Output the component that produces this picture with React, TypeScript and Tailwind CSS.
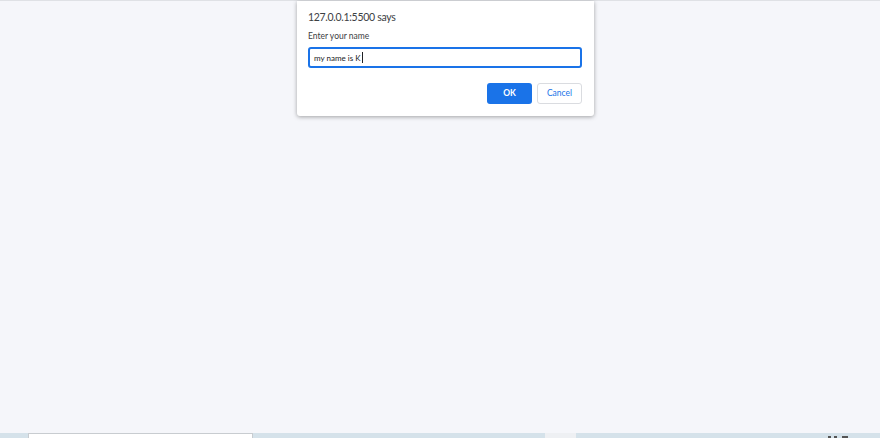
import React from 'react';

const PromptDialog = () => {
  return (
    <div className="absolute left-[297px] top-0 w-[297px] h-[115px] bg-white rounded-b-[3px] shadow-[0_1px_4px_rgba(0,0,0,0.35)] px-[11px] pt-[9px]">
      <div className="text-[10.5px] leading-[14px] tracking-[-0.3px] text-[#3c4043]">127.0.0.1:5500 says</div>
      <div className="mt-[6px] text-[8.5px] leading-[12px] text-[#3c4043]">Enter your name</div>
      <div className="mt-[5px] h-[21px] w-[274px] border-2 border-[#1a73e8] rounded-[3px] flex items-center pl-[4px] text-[8px] text-[#202124]">
        my name is K
        <span className="ml-[2px] inline-block w-px h-[11px] bg-[#202124]" />
      </div>
      <div className="mt-[15px] flex justify-end gap-[5px] pr-[1px]">
        <button className="w-[45px] h-[21px] rounded-[3px] bg-[#1a73e8] text-white text-[8.5px] font-bold">OK</button>
        <button className="w-[45px] h-[21px] rounded-[3px] bg-white border border-[#dadce0] text-[#1a73e8] text-[8.5px]">Cancel</button>
      </div>
    </div>
  );
};

export default function App() {
  return (
    <div className="h-[438px] w-[880px] flex flex-col bg-[#f5f6fa] overflow-hidden" style={{ fontFamily: 'Lato, "Open Sans", sans-serif' }}>
      <div className="relative flex-1 border-t border-[#dfe1e5]">
        <PromptDialog />
      </div>
      {/* taskbar edge peeking in at the bottom */}
      <div className="h-[5px] flex bg-[#d5e2ea]">
        <div className="ml-[28px] w-[225px] bg-white border-l border-r border-[#c8ccd0] border-t" />
        <div className="ml-[292px] w-[31px] bg-[#eef0f3]" />
        <div className="ml-[252px] flex gap-[3px] items-end">
          <span className="w-[3px] h-[2px] bg-[#555]" />
          <span className="w-[3px] h-[2px] bg-[#555]" />
          <span className="ml-[2px] w-[6px] h-[2px] bg-[#555]" />
        </div>
      </div>
    </div>
  );
}
